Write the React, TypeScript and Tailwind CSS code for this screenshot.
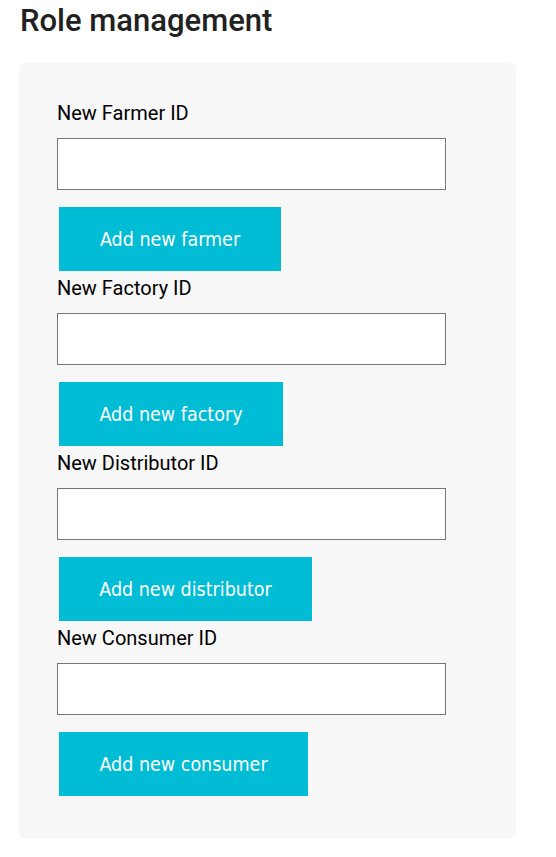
import React from 'react';

const roles = [
  { label: 'New Farmer ID', button: 'Add new farmer', width: 'w-[222px]' },
  { label: 'New Factory ID', button: 'Add new factory', width: 'w-[224px]' },
  { label: 'New Distributor ID', button: 'Add new distributor', width: 'w-[253px]' },
  { label: 'New Consumer ID', button: 'Add new consumer', width: 'w-[249px]' },
];

export default function App() {
  return (
    <div className="min-h-screen bg-white px-[19px] pt-[3px] font-['Roboto',sans-serif] text-[#212121]">
      <h1 className="pl-[1px] text-[31px] leading-[36px] font-medium">Role management</h1>

      <div className="mt-[24px] w-[497px] rounded-[6px] bg-[#f7f7f7] pl-[38px] pt-[39px] pb-[42px]">
        {roles.map((role, i) => (
          <div key={role.label} className={i > 0 ? 'mt-[6px]' : ''}>
            <label className="block text-[20px] leading-[22px] text-black">{role.label}</label>
            <input
              type="text"
              className="mt-[14px] block h-[52px] w-[389px] border border-[#767676] bg-white px-2 outline-none"
            />
            <button
              className={`ml-[2px] mt-[17px] block h-[64px] ${role.width} bg-[#00bcd4] pt-[2px] text-center font-['DejaVu_Sans_Condensed','DejaVu_Sans',sans-serif] text-[19.5px] text-white`}
            >
              {role.button}
            </button>
          </div>
        ))}
      </div>
    </div>
  );
}
